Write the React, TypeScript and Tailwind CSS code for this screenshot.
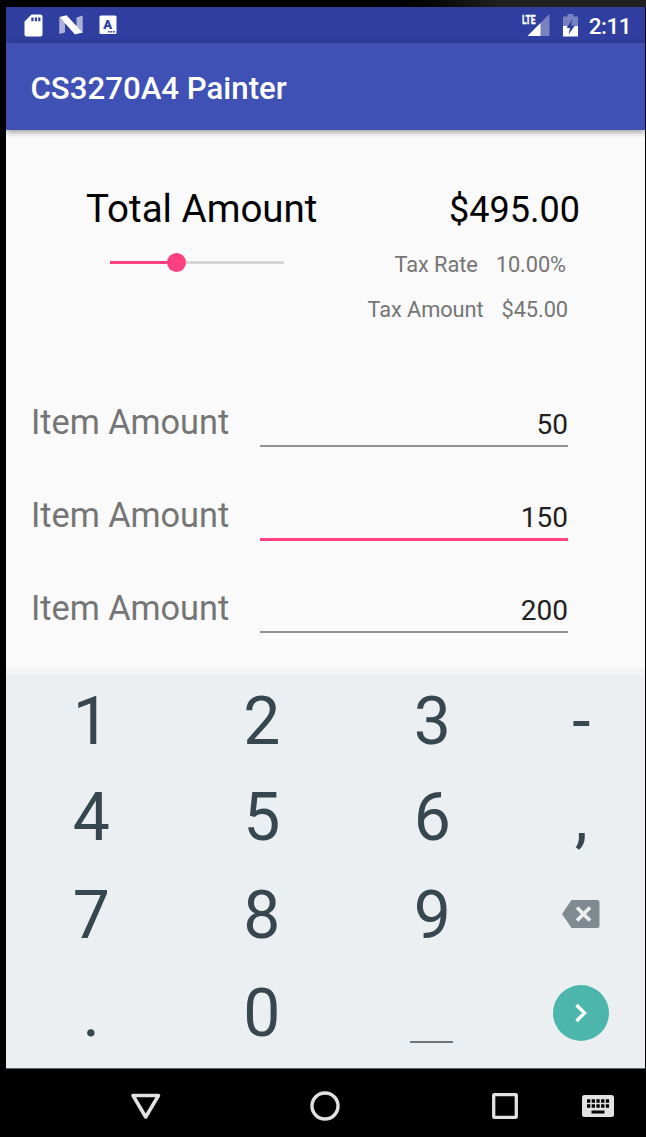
import React from "react";

const keyText = "mt-[3px] text-[66px] leading-none text-[#37474f]";

function StatusBar() {
  return (
    <div className="flex h-9 shrink-0 items-center bg-[#303f9f] text-white">
      <svg className="ml-[18px] h-[23px] w-[19px]" viewBox="0 0 19 23" fill="currentColor">
        <path fillRule="evenodd" d="M7.500 .5H16.500a2 2 0 0 1 2 2V20.500a2 2 0 0 1-2 2H2.500a2 2 0 0 1-2-2V7.500zM7.300 3.500v3.800h2.200V3.500zM10.800 3.500v3.800H13V3.500zM14.200 3.500v3.800h2.200V3.500z" />
      </svg>
      <svg className="ml-4 h-[20px] w-[24px]" viewBox="0 0 24 20" fill="currentColor">
        <path opacity=".6" d="M.3 2 6 8V17.500L.3 19zM23.700.5V18L17.500 12V2.500z" />
        <path d="M.5 2 7.500 .3 23.500 17.500 16 19.500z" />
      </svg>
      <svg className="ml-4 h-[20px] w-[18px]" viewBox="0 0 18 20">
        <rect x=".5" y=".5" width="17" height="18.500" rx="1.500" fill="#fff" />
        <text x="8.800" y="13.500" textAnchor="middle" fontSize="13" fontWeight="900" fontFamily="Roboto, sans-serif" fill="#303f9f">A</text>
        <path d="M9 16.800H16" stroke="#303f9f" strokeWidth="1.500" strokeDasharray="1.700 .8" />
      </svg>
      <svg className="ml-auto h-[24px] w-[28px]" viewBox="0 0 28 24">
        <path d="M27.500 1V23H5.500z" fill="#fff" opacity=".35" />
        <path d="M18.500 10V23H5.500z" fill="#fff" />
        <text transform="scale(.62 1)" x="0" y="10.800" fontSize="13.500" fontWeight="700" fontFamily="Roboto, sans-serif" fill="#fff" stroke="#fff" strokeWidth=".4">LTE</text>
      </svg>
      <svg className="ml-[13px] h-[24px] w-[15px]" viewBox="0 0 15 24">
        <path d="M4.500 1H10.500V3.500H15V13H0V3.500H4.500z" fill="#fff" opacity=".35" />
        <path d="M0 13H15V23.500H0z" fill="#fff" />
        <path d="M9.500 6 3.500 15H7L5.500 21.500 12 12.500H8z" fill="#303f9f" />
      </svg>
      <span className="mr-[14px] ml-[11px] pt-[2px] text-[22.500px] leading-9 font-medium tracking-[-0.500px]">2:11</span>
    </div>
  );
}

function Slider() {
  return (
    <div className="relative mt-[8px] ml-[104px] flex h-[19px] w-[174px] items-center">
      <div className="h-[3px] w-[66px] bg-[#ff4081]" />
      <div className="h-[3px] flex-1 bg-[#d6d6d6]" />
      <div className="absolute top-0 left-[57px] size-[19px] rounded-full bg-[#ff4081]" />
    </div>
  );
}

function ItemRow({ value, active = false }: { value: string; active?: boolean }) {
  return (
    <div className="flex h-[93.300px] items-start pl-[25px]">
      <div className="w-[229px] text-[34.300px] leading-[59px] tracking-[-0.030px] text-[#757575]">Item Amount</div>
      <div
        className={
          active
            ? "h-[55px] w-[308px] border-b-[3px] border-[#ff4081] text-right text-[28px] leading-[64px] text-[#212121]"
            : "h-[54px] w-[308px] border-b-2 border-[#929292] text-right text-[28px] leading-[64px] text-[#212121]"
        }
      >
        {value}
      </div>
    </div>
  );
}

function Keypad() {
  const keys = ["1", "2", "3", "-", "4", "5", "6", ",", "7", "8", "9", "back", ".", "0", "space", "next"];
  return (
    <div className="grid h-[396px] shrink-0 grid-cols-[170.500px_170.500px_170.500px_1fr] grid-rows-[93px_98.600px_97.600px_98.400px] border-t-2 border-[#f3f5f6] bg-[#ebeff2]">
      {keys.map((k) => (
        <div key={k} className="flex items-center justify-center">
          {k === "back" ? (
            <svg className="h-7 w-[38px]" viewBox="0 0 38 28">
              <path d="M9.500 0H35a2.500 2.500 0 0 1 2.500 2.500V25.500a2.500 2.500 0 0 1-2.500 2.500H9.500L0 14z" fill="#7f8b90" />
              <path d="M15 7.500 28 20.500M28 7.500 15 20.500" stroke="#ebeff2" strokeWidth="3.600" />
            </svg>
          ) : k === "next" ? (
            <div className="mt-px flex size-14 items-center justify-center rounded-full bg-[#4db6ac]">
              <svg className="h-5 w-3" viewBox="0 0 12 20" fill="none" stroke="#fff" strokeWidth="3.400">
                <path d="M1.500 2 9.500 10 1.500 18" />
              </svg>
            </div>
          ) : k === "space" ? (
            <div className="mt-[59px] mr-px h-[2px] w-[43px] bg-[#6b777c]" />
          ) : (
            <span className={keyText}>{k}</span>
          )}
        </div>
      ))}
    </div>
  );
}

function NavBar() {
  return (
    <div className="flex flex-1 items-center border-t border-[#666] bg-black pt-[6px] text-[#e2e2e2]">
      <svg className="ml-[124px] h-[30px] w-[32px]" viewBox="0 0 32 30" fill="none" stroke="currentColor" strokeWidth="3.500" strokeLinejoin="round">
        <path d="M3 4.500H28.500L15.700 26z" />
      </svg>
      <svg className="ml-[148px] size-[30px]" viewBox="0 0 30 30" fill="none" stroke="currentColor" strokeWidth="3.400">
        <circle cx="15" cy="15" r="13" />
      </svg>
      <svg className="ml-[152px] size-[26px]" viewBox="0 0 26 26" fill="none" stroke="currentColor" strokeWidth="3.300">
        <rect x="1.700" y="1.700" width="22.600" height="22.600" rx=".5" />
      </svg>
      <svg className="ml-[64px] h-[22px] w-[32px]" viewBox="0 0 32 22">
        <rect width="32" height="22" rx="2.500" fill="currentColor" />
        <path d="M5 6H27.500M5 11H27.500" stroke="#000" strokeWidth="3.300" strokeDasharray="3.300 1.400" />
        <path d="M9.500 17H22.500" stroke="#000" strokeWidth="3" />
      </svg>
    </div>
  );
}

export default function App() {
  return (
    <div className="h-[1137px] w-[646px] bg-black font-['Roboto',sans-serif]">
      <div className="h-[7px] bg-linear-to-r from-black from-55% to-[#202020] to-77%" />
      <div className="mr-px ml-[6px] flex h-[1130px] flex-col">
        <StatusBar />
        <header className="z-10 flex h-[87px] shrink-0 items-center bg-[#3f51b5] pt-[5px] pl-[24.500px] text-[31.200px] font-medium text-white shadow-[0_2px_6px_rgba(0,0,0,0.4)]">
          CS3270A4 Painter
        </header>
        <main className="flex h-[542px] shrink-0 flex-col bg-linear-to-b from-[#fafafa] from-99% to-[#f0f0f0]">
          <div className="mt-[54px] flex h-[50px] items-center justify-between pr-[65px] pl-[80px] text-black">
            <span className="text-[38.500px]">Total Amount</span>
            <span className="pt-[2px] text-[36px]">$495.00</span>
          </div>
          <div className="flex h-[159px] items-start justify-between pt-[11px] text-[21.800px] text-[#757575]">
            <Slider />
            <div className="flex flex-col items-end pr-[77px]">
              <div className="flex h-[45px] gap-[18px] pr-[2px] leading-[39px] tracking-[-0.080px]">
                <span>Tax Rate</span>
                <span>10.00%</span>
              </div>
              <div className="flex gap-[18px] leading-[39px] tracking-[-0.080px]">
                <span>Tax Amount</span>
                <span>$45.00</span>
              </div>
            </div>
          </div>
          <ItemRow value="50" />
          <ItemRow value="150" active />
          <ItemRow value="200" />
        </main>
        <Keypad />
        <NavBar />
      </div>
    </div>
  );
}
